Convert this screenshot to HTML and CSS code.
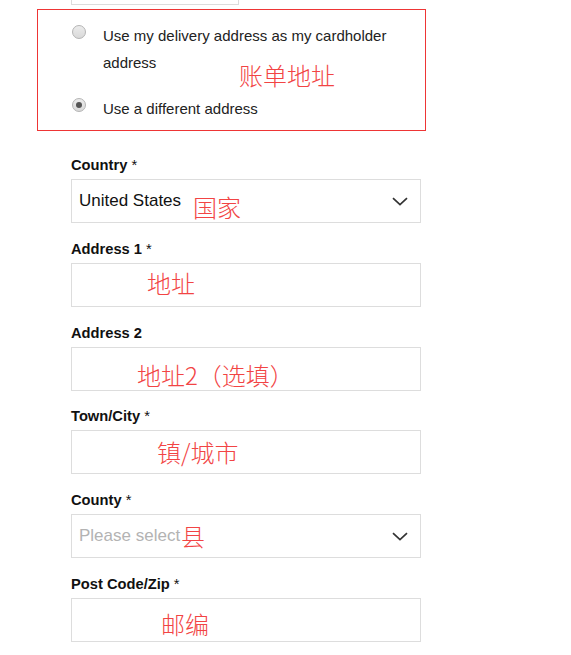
FILE: index.html
```html
<!DOCTYPE html>
<html lang="en">
<head>
<meta charset="utf-8">
<title>Billing address</title>
<link rel="stylesheet" href="styles.css">
</head>
<body>
<div class="top-box"></div>
<div class="billing">
  <div class="option">
    <span class="radio"></span>
    <span class="option-text">Use my delivery address as my cardholder address</span>
  </div>
  <div class="option">
    <span class="radio checked"></span>
    <span class="option-text">Use a different address</span>
  </div>
  <span class="note note-billing">账单地址</span>
</div>
<div class="form">
  <div class="field">
    <div class="label">Country <span class="req">*</span></div>
    <div class="box select">
      <span class="value">United States</span>
      <svg class="chev" width="16" height="9" viewBox="0 0 16 9"><path d="M1 1.2 L8 7.6 L15 1.2" fill="none" stroke="#333" stroke-width="1.7"/></svg>
      <span class="note n-country">国家</span>
    </div>
  </div>
  <div class="field">
    <div class="label">Address 1 <span class="req">*</span></div>
    <div class="box"><span class="note n-addr1">地址</span></div>
  </div>
  <div class="field">
    <div class="label">Address 2</div>
    <div class="box"><span class="note n-addr2">地址2（选填）</span></div>
  </div>
  <div class="field">
    <div class="label">Town/City <span class="req">*</span></div>
    <div class="box"><span class="note n-city">镇/城市</span></div>
  </div>
  <div class="field">
    <div class="label">County <span class="req">*</span></div>
    <div class="box select">
      <span class="value placeholder">Please select</span>
      <svg class="chev" width="16" height="9" viewBox="0 0 16 9"><path d="M1 1.2 L8 7.6 L15 1.2" fill="none" stroke="#333" stroke-width="1.7"/></svg>
      <span class="note n-county">县</span>
    </div>
  </div>
  <div class="field">
    <div class="label">Post Code/Zip <span class="req">*</span></div>
    <div class="box"><span class="note n-zip">邮编</span></div>
  </div>
</div>
</body>
</html>
```
FILE: styles.css
```css
* { box-sizing: border-box; }
html, body { margin: 0; padding: 0; background: #fff; }
body {
  font-family: "Liberation Sans", Arial, sans-serif;
  color: #222;
  width: 571px;
  height: 655px;
  overflow: hidden;
}
.top-box {
  margin-left: 71px;
  width: 168px;
  height: 5px;
  border: 1px solid #dcdcdc;
  border-top: none;
}
.billing {
  position: relative;
  margin-top: 4px;
  margin-left: 37px;
  width: 389px;
  height: 122px;
  border: 1px solid #ee3535;
  padding: 12px 0 0 34px;
  display: flex;
  flex-direction: column;
  gap: 19px;
}
.option {
  display: flex;
  align-items: flex-start;
  gap: 17px;
}
.radio {
  flex: none;
  width: 14px;
  height: 14px;
  margin-top: 3px;
  border-radius: 50%;
  border: 1px solid #b4b4b4;
  background: linear-gradient(#ececec, #d9d9d9);
  display: flex;
  align-items: center;
  justify-content: center;
}
.radio.checked::after {
  content: "";
  width: 6px;
  height: 6px;
  border-radius: 50%;
  background: #555;
}
.option-text {
  font-size: 15px;
  line-height: 27px;
  max-width: 300px;
  color: #222;
}
.note {
  position: absolute;
  font-family: "Noto Sans CJK SC", sans-serif;
  font-size: 24px;
  font-weight: 300;
  line-height: 24px;
  color: #f24444;
  white-space: nowrap;
}
.note-billing { left: 201px; top: 53px; }
.form {
  margin-top: 24px;
  margin-left: 71px;
  width: 350px;
}
.field { margin-bottom: 15.8px; }
.label {
  font-size: 14.7px;
  line-height: 20px;
  font-weight: bold;
  color: #111;
  margin-bottom: 4px;
}
.req { font-weight: normal; }
.box {
  position: relative;
  height: 44px;
  border: 1px solid #dddddd;
  display: flex;
  align-items: center;
  padding: 0 12px 0 7px;
}
.select { justify-content: space-between; }
.value {
  font-size: 17px;
  color: #111;
}
.value.placeholder { color: #b3b3b3; }
.chev { flex: none; }
.n-country { left: 121px; top: 15px; }
.n-addr1 { left: 75px; top: 7px; }
.n-addr2 { left: 65px; top: 15px; }
.n-city { left: 85px; top: 9px; }
.n-county { left: 109px; top: 9px; }
.n-zip { left: 89px; top: 13px; }
```
